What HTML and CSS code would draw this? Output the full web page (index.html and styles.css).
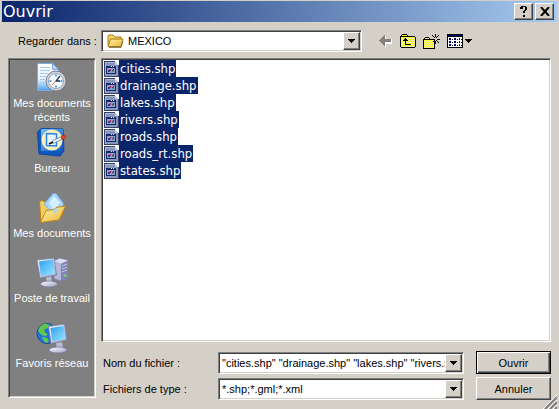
FILE: index.html
```html
<!DOCTYPE html>
<html lang="fr">
<head>
<meta charset="utf-8">
<title>Ouvrir</title>
<link rel="stylesheet" href="styles.css">
</head>
<body>
<svg class="defs" aria-hidden="true">
  <defs>
    <linearGradient id="screen" x1="0" y1="0" x2="1" y2="1"><stop offset="0" stop-color="#2b9cf0"/><stop offset="1" stop-color="#9feaff"/></linearGradient>
    <linearGradient id="folder" x1="0" y1="0" x2="1" y2="1"><stop offset="0" stop-color="#fff3a8"/><stop offset="1" stop-color="#e9b53c"/></linearGradient>
    <linearGradient id="desk" x1="0" y1="0" x2="1" y2="1"><stop offset="0" stop-color="#6fc0fa"/><stop offset="1" stop-color="#0c55bd"/></linearGradient>
    <linearGradient id="paper" x1="0" y1="0" x2="0" y2="1"><stop offset="0" stop-color="#fff"/><stop offset=".6" stop-color="#e4f1ff"/><stop offset="1" stop-color="#4f9fec"/></linearGradient>
    <linearGradient id="metal" x1="0" y1="0" x2="1" y2="1"><stop offset="0" stop-color="#fff"/><stop offset="1" stop-color="#9a9dc4"/></linearGradient>
    <pattern id="dither" width="2" height="2" patternUnits="userSpaceOnUse"><path fill="#ffff38" d="M0 0h2v2H0z"/><path fill="#e6e2a0" d="M0 0h1v1H0zM1 1h1v1H1z"/></pattern>
    <symbol id="shp" viewBox="0 0 15 16">
      <g shape-rendering="crispEdges">
        <path fill="#33406c" d="M0 0h11v1h1v1h1v1h1v1h1v12H0z"/>
        <path fill="#8796ba" d="M1 1h10v3h3v11H1z"/>
        <path fill="#a7b4d0" d="M1 1h10v1H2v13H1z"/>
        <path fill="#c3cde2" d="M11 1h1v1h1v1h1v1h-3z"/>
        <path fill="#16276a" d="M2 5h10v8H2z"/>
        <path fill="#8fa2cc" d="M3 7h8v5H3z"/>
        <path fill="#dfe6f5" d="M7 5h1v1H7zM9 5h1v1H9z"/>
        <path fill="#b0204c" d="M6 8h1v2H6zM8 9h2v1H8z"/>
        <path fill="#1b3f9a" d="M4 9h2v2H4zM9 8h1v1H9z"/>
        <path fill="#2aa38c" d="M8 10h2v1H8z"/>
      </g>
    </symbol>
    <symbol id="down" viewBox="0 0 7 4"><path d="M0 0h7v1H6v1H5v1H4v1H3V3H2V2H1V1H0z"/></symbol>
  </defs>
</svg>
<main class="dialog">
  <header class="titlebar">
    <h1 class="title">Ouvrir</h1>
    <button class="caption" type="button" aria-label="Aide">
      <svg width="8" height="11" viewBox="0 0 8 11" shape-rendering="crispEdges"><path d="M1 0h5v1H1zM0 1h3v2H0zM5 1h2v3H5zM4 4h2v1H4zM3 5h2v2H3zM3 9h2v2H3z"/></svg>
    </button>
    <button class="caption" type="button" aria-label="Fermer">
      <svg width="10" height="9" viewBox="0 0 10 9"><path d="M1 0l8 9M9 0L1 9" fill="none" stroke="#000" stroke-width="2"/></svg>
    </button>
  </header>

  <form class="content">
    <div class="lookin">
      <label class="lookin-label" for="folder-select">Regarder dans :</label>
      <div class="combo lookin-combo">
        <svg class="folder-icon" width="17" height="14" viewBox="0 0 17 14"><path d="M1 11V2l1-1h4l2 2h6v3" fill="#f5d568" stroke="#a87b10"/><path d="M1 12.500L3.500 5H16l-2 7.500z" fill="url(#folder)" stroke="#a87b10"/><path d="M2 13.500h12l2-6" fill="none" stroke="#5c4a20" stroke-width=".7"/></svg>
        <select class="field" id="folder-select"><option>MEXICO</option></select>
        <span class="drop"><svg width="7" height="4"><use href="#down"/></svg></span>
      </div>
      <div class="tools">
        <button class="tool" type="button" aria-label="Précédent" disabled>
          <svg width="14" height="12" viewBox="0 0 14 12" shape-rendering="crispEdges"><path fill="#fff" d="M6 1h1v3h6v5H7v3H6l-5-5z"/><path fill="#808080" d="M5 0h1v4h6v3H6v4H5V10H4V9H3V8H2V7H1V6H0V5h1V4h1V3h1V2h1V1h1z"/></svg>
        </button>
        <button class="tool" type="button" aria-label="Dossier parent">
          <svg width="16" height="14" viewBox="0 0 16 14" shape-rendering="crispEdges"><path d="M2 0h5v1h1v1h7v1h1v10h-1v1H1v-1H0V2h1V1h1z"/><path fill="url(#dither)" d="M2 1h5v1H2zM1 3h14v10H1z"/><path d="M5 4h1v1h1v1h1v1H6v3h5v1H5V7H3V6h1V5h1z"/></svg>
        </button>
        <button class="tool" type="button" aria-label="Nouveau dossier">
          <svg width="17" height="15" viewBox="0 0 17 15" shape-rendering="crispEdges"><path d="M2 3h4v1h1v1h5v10H0V5h1V4h1z"/><path fill="url(#dither)" d="M2 4h4v1H2zM1 6h10v8H1z"/><path d="M12 0h1v3h-1zM12 7h1v3h-1zM8 5h3v1H8zM14 5h3v1h-3zM9 1h1v1H9zM10 2h1v1h-1zM11 3h1v1h-1zM15 1h1v1h-1zM14 2h1v1h-1zM13 3h1v1h-1zM13 6h1v1h-1zM14 7h1v1h-1zM15 8h1v1h-1zM10 7h1v1h-1z"/></svg>
        </button>
        <button class="tool" type="button" aria-label="Affichage">
          <svg width="25" height="14" viewBox="0 0 25 14" shape-rendering="crispEdges"><path d="M0 0h16v14H0z"/><path fill="#00007b" d="M1 1h14v1H1z"/><path fill="#fff" d="M1 3h14v10H1z"/><path fill="#00007b" d="M2 4h2v2H2zM7 4h2v2H7zM12 4h1v2h-1zM2 7h2v2H2zM7 7h2v2H7zM12 7h1v2h-1zM2 10h2v2H2zM7 10h2v2H7zM12 10h1v2h-1z"/><path d="M5 5h1v1H5zM10 5h1v1h-1zM14 5h1v1h-1zM5 8h1v1H5zM10 8h1v1h-1zM14 8h1v1h-1zM5 11h1v1H5zM10 11h1v1h-1zM14 11h1v1h-1z"/><path d="M18 5h7v1h-1v1h-1v1h-1v1h-1V8h-1V7h-1V6h-1z"/></svg>
        </button>
      </div>
    </div>

    <div class="columns">
      <nav class="places">
        <a class="place" href="#recent">
          <svg width="32" height="32" viewBox="0 0 32 32"><path d="M1.500 1.500h15l6 6v21h-21z" fill="url(#paper)" stroke="#7ba9e0"/><path d="M16.500 1.500v6h6z" fill="#b9d4f5" stroke="#7ba9e0"/><path d="M4 5.500h10M4 8.500h10M4 11.500h8M4 14.500h6M4 17.500h5M4 20.500h5" stroke="#a9cbf2"/><circle cx="20" cy="19" r="10" fill="#d3d5de" stroke="#777b88"/><circle cx="20" cy="19" r="7.500" fill="#f6fbff" stroke="#98a2b5"/><path d="M20 12.500v2M20 23.500v2M13.500 19h2M24.500 19h2" stroke="#2f86dd" stroke-width="1.500"/><path d="M24 14l-4 5h4" fill="none" stroke="#26344f" stroke-width="1.300"/><path d="M20 19l-4 4" stroke="#e07040"/></svg>
          <span>Mes documents récents</span>
        </a>
        <a class="place" href="#desktop">
          <svg width="32" height="32" viewBox="0 0 32 32"><path d="M5 1.500l22 .5 1 22-4 5-21-2L1.500 5z" fill="#0f57bd" stroke="#0c49a3"/><path d="M5 2h22v22H5z" fill="url(#desk)"/><ellipse cx="16" cy="13" rx="10.500" ry="10.500" fill="#fbf0bd"/><path d="M10.500 6.500l10 .5v12l-10-.5z" fill="#e9f5ff" stroke="#2584de" stroke-width="1.500"/><path d="M15 16l2-2.500 8-3.500 1 2.500-8 3.500z" fill="#f6f8fc" stroke="#5c7da8" stroke-width=".8"/><path d="M13 17l4-2" stroke="#111" stroke-width="1.500"/><path d="M25 9.500l3-1.500q3 1 1 3.500l-3 1z" fill="#e24a1c" stroke="#9c2808" stroke-width=".6"/></svg>
          <span>Bureau</span>
        </a>
        <a class="place" href="#documents">
          <svg width="32" height="32" viewBox="0 0 32 32"><path d="M3.500 10l2-1.500 5 1.500 3 3 13-2v12L5 30z" fill="#f2cf62" stroke="#b98313"/><path d="M8 12L17 1.500h3L28 12l-9 12z" fill="#a8d5f8" stroke="#69a7dc" stroke-width=".8"/><path d="M13 11l5-7 6 7-6 7z" fill="#d6efff"/><path d="M4.500 30.500l5.500-12 8-1 2-2 9.500-1.500L23 28z" fill="url(#folder)" stroke="#c08a18"/><path d="M16 18.500l3 3 4-5.500-3 .5-1.500 1.500z" fill="#a8d5f8"/></svg>
          <span>Mes documents</span>
        </a>
        <a class="place" href="#computer">
          <svg width="32" height="32" viewBox="0 0 32 32"><path d="M18 4l6-2.500 8 2V21l-7 3-7-2z" fill="#b6b8da" stroke="#777ba6" stroke-width=".8"/><path d="M25 6.500l7-3V21l-7 3z" fill="#8184b5"/><path d="M18 4l7 2.500 7-3-8-2z" fill="#dcddf0"/><path d="M26 9l5-2M26 12l5-2M26 15l5-2" stroke="#c3c5e2"/><path d="M28 19l2-1" stroke="#6fe050" stroke-width="2"/><path d="M1 3l17-2 2.500 17L4 21z" fill="url(#metal)" stroke="#7b7fa6" stroke-width=".8"/><path d="M3 4.500l14-2 2 14.500-14 2z" fill="url(#screen)"/><path d="M10 20.500l5-1 1 6-5 1z" fill="#b9bbd5"/><ellipse cx="13" cy="27" rx="8.500" ry="3" fill="url(#metal)" stroke="#777b9f" stroke-width=".8"/></svg>
          <span>Poste de travail</span>
        </a>
        <a class="place" href="#network">
          <svg width="32" height="32" viewBox="0 0 32 32"><circle cx="11" cy="11.500" r="10" fill="#2272da" stroke="#174a9c"/><path d="M2 9q1-6 8-7.500l4 2-3 3-3 1 1 3 3 2-3 2-4-2zM6 15l5 1 2 3-2 2q-4-1-5-6z" fill="#62c848"/><path d="M12.500 4.500l16-2.500 2.500 16-16 3.500z" fill="url(#metal)" stroke="#7b7fa6" stroke-width=".8"/><path d="M14.500 6l13-2 2 13-13 2.500z" fill="url(#screen)"/><path d="M20 21l6-1 1 6-6 1z" fill="#b9bbd5"/><ellipse cx="22" cy="28" rx="9" ry="3" fill="url(#metal)" stroke="#777b9f" stroke-width=".8"/></svg>
          <span>Favoris réseau</span>
        </a>
      </nav>

      <div class="main">
        <ul class="files">
          <li class="file"><svg width="15" height="16"><use href="#shp"/></svg><span class="name">cities.shp</span></li>
          <li class="file"><svg width="15" height="16"><use href="#shp"/></svg><span class="name">drainage.shp</span></li>
          <li class="file"><svg width="15" height="16"><use href="#shp"/></svg><span class="name">lakes.shp</span></li>
          <li class="file"><svg width="15" height="16"><use href="#shp"/></svg><span class="name">rivers.shp</span></li>
          <li class="file"><svg width="15" height="16"><use href="#shp"/></svg><span class="name">roads.shp</span></li>
          <li class="file"><svg width="15" height="16"><use href="#shp"/></svg><span class="name">roads_rt.shp</span></li>
          <li class="file"><svg width="15" height="16"><use href="#shp"/></svg><span class="name">states.shp</span></li>
        </ul>
        <div class="bottom">
          <label for="filename">Nom du fichier :</label>
          <div class="combo">
            <input class="field" id="filename" type="text" value="&quot;cities.shp&quot; &quot;drainage.shp&quot; &quot;lakes.shp&quot; &quot;rivers.shp&quot; &quot;roads.shp&quot;">
            <button class="drop" type="button" aria-label="Historique"><svg width="7" height="4"><use href="#down"/></svg></button>
          </div>
          <button class="push default" type="submit">Ouvrir</button>
          <label for="filetype">Fichiers de type :</label>
          <div class="combo">
            <select class="field" id="filetype"><option>*.shp;*.gml;*.xml</option></select>
            <span class="drop"><svg width="7" height="4"><use href="#down"/></svg></span>
          </div>
          <button class="push" type="button">Annuler</button>
        </div>
      </div>
    </div>
  </form>
  <svg class="grip" width="14" height="14" viewBox="0 0 14 14"><path d="M0 14L14 0M5 14l9-9M10 14l4-4" stroke="#fff"/><path d="M2 14L14 2M7 14l7-7M12 14l2-2" stroke="#808080" stroke-width="2"/></svg>
</main>
</body>
</html>
```
FILE: styles.css
```css
* {
  box-sizing: border-box;
}

body {
  margin: 0;
  background: #d4d0c8;
  color: #000;
  font: 11px/14px "Liberation Sans", Arial, sans-serif;
}

button,
input,
select {
  margin: 0;
  border-radius: 0;
  color: inherit;
  font: inherit;
}

svg {
  display: block;
  flex: none;
}

.defs {
  position: absolute;
  width: 0;
  height: 0;
}

.dialog {
  position: relative;
  display: flex;
  flex-direction: column;
  min-height: 100vh;
  padding: 1px 2px 0;
}

.titlebar {
  display: flex;
  align-items: center;
  gap: 2px;
  height: 21px;
  padding: 0 3px 0 1px;
  background: linear-gradient(90deg, #0a246a, #a6caf0);
}

.title {
  flex: 1;
  margin: 0;
  color: #fff;
  font: 16px/20px "DejaVu Sans", Verdana, sans-serif;
}

.caption,
.drop,
.push {
  display: flex;
  align-items: center;
  justify-content: center;
  padding: 0;
  border: 1px solid;
  border-color: #fff #404040 #404040 #fff;
  background: #d4d0c8;
  box-shadow: inset -1px -1px #808080;
}

.caption {
  width: 19px;
  height: 17px;
}

.content {
  display: flex;
  flex: 1;
  flex-direction: column;
  gap: 6px;
  padding: 8px 6px 9px;
}

.lookin {
  display: flex;
  align-items: center;
}

.lookin-label {
  width: 93px;
  padding-left: 10px;
  white-space: nowrap;
}

.combo {
  display: flex;
  align-items: center;
  min-width: 0;
  height: 22px;
  padding: 1px;
  border: 1px solid;
  border-color: #808080 #fff #fff #808080;
  background: #fff;
  box-shadow: inset 1px 1px #404040, inset -1px -1px #d4d0c8;
}

.lookin-combo {
  flex: 0 1 261px;
}

.folder-icon {
  margin-left: 4px;
}

.field {
  flex: 1;
  min-width: 0;
  height: 100%;
  padding: 0 0 0 2px;
  border: 0;
  outline: 0;
  appearance: none;
  background: transparent;
}

.lookin-combo .field {
  padding-left: 4px;
}

.drop {
  flex: none;
  width: 17px;
  height: 100%;
}

.tools {
  display: flex;
  align-items: center;
  gap: 7px;
  margin-left: 17px;
}

.tool {
  padding: 0;
  border: 0;
  background: none;
}

.columns {
  display: grid;
  flex: 1;
  grid-template-columns: 88px minmax(0, 1fr);
  gap: 5px;
}

.places {
  margin-bottom: 2px;
  padding: 3px 1px;
  border: 1px solid;
  border-color: #808080 #fff #fff #808080;
  background: #808080;
  box-shadow: inset 1px 1px #404040, inset -1px -1px #d4d0c8;
}

.place {
  display: flex;
  flex-direction: column;
  align-items: center;
  gap: 2px;
  min-height: 65px;
  color: #fff;
  text-align: center;
  text-decoration: none;
}

.main {
  display: flex;
  flex-direction: column;
  gap: 9px;
}

.files {
  flex: 1;
  margin: 0;
  padding: 1px 2px;
  border: 1px solid;
  border-color: #808080 #fff #fff #808080;
  background: #fff;
  box-shadow: inset 1px 1px #404040, inset -1px -1px #d4d0c8;
  list-style: none;
}

.file {
  display: flex;
  align-items: center;
  height: 17px;
}

.name {
  padding: 0 1px;
  background: #0a246a;
  color: #fff;
  font: 13px/17px "DejaVu Sans Condensed", "DejaVu Sans", Verdana, sans-serif;
}

.bottom {
  display: grid;
  grid-template-columns: 112px minmax(0, 1fr) 75px;
  align-items: center;
  row-gap: 3px;
}

.bottom label {
  padding-left: 2px;
}

.push {
  height: 23px;
}

.bottom .combo {
  margin: 0 12px 0 5px;
}

.default {
  border-color: #000;
  box-shadow: inset 1px 1px #fff, inset -1px -1px #404040, inset -2px -2px #808080;
}

.grip {
  position: absolute;
  right: 2px;
  bottom: 0;
}
```
